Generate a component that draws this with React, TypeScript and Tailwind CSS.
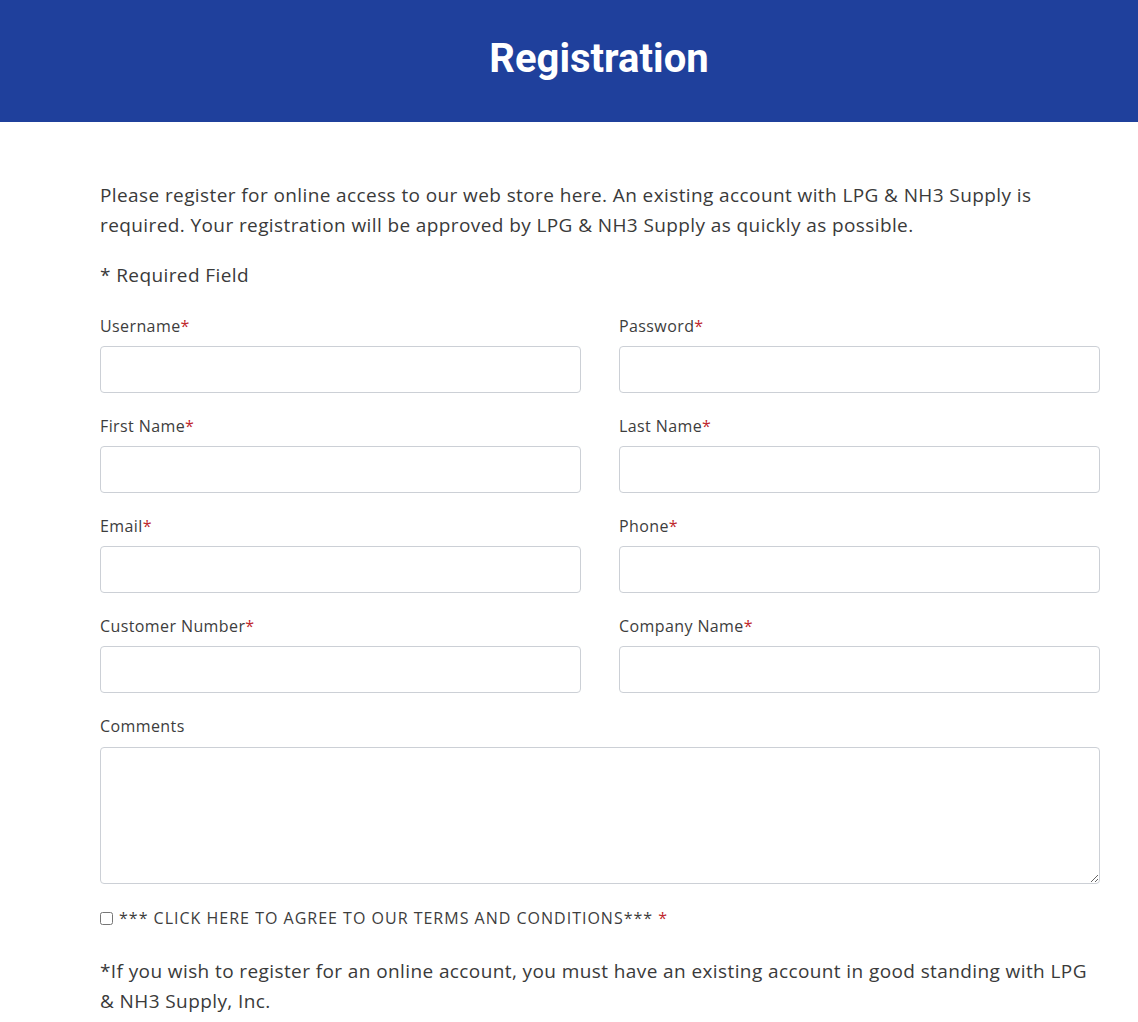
const FIELDS: readonly [string, string][] = [
  ["Username", "Password"],
  ["First Name", "Last Name"],
  ["Email", "Phone"],
  ["Customer Number", "Company Name"],
];

function Field({ label }: { readonly label: string }) {
  return (
    <div className="flex flex-col">
      <label className="h-[20px] text-[16px] leading-[20px] tracking-[0.4px] text-[#3d3d3d]">
        {label}
        <span className="text-[#c0282d]">*</span>
      </label>
      <input
        type="text"
        className="mt-[10px] h-[47px] w-full rounded-[4px] border border-[#ccd0d6] bg-white px-3 outline-none"
      />
    </div>
  );
}

export default function App() {
  return (
    <div className="min-h-screen bg-white font-['Open_Sans',sans-serif] text-[#3a3a3a]">
      <header className="flex h-[122px] items-center justify-center bg-[#1f409c] pb-[4px]">
        <h1 className="pl-[60px] font-['Roboto',sans-serif] text-[40px] font-bold text-white">
          Registration
        </h1>
      </header>

      <main className="ml-[100px] w-[1000px] pt-[58px]">
        <p className="text-[19px] leading-[30px] tracking-[0.4px]">
          Please register for online access to our web store here. An existing account with LPG &amp; NH3 Supply is
          required. Your registration will be approved by LPG &amp; NH3 Supply as quickly as possible.
        </p>
        <p className="mt-[20px] text-[19px] leading-[30px] tracking-[0.4px]">* Required Field</p>

        <div className="mt-[26px] grid grid-cols-2 gap-x-[38px] gap-y-[23px]">
          {FIELDS.map(([a, b]) => [<Field key={a} label={a} />, <Field key={b} label={b} />])}
        </div>

        <div className="mt-[23px] flex flex-col">
          <label className="h-[20px] text-[16px] leading-[20px] tracking-[0.4px] text-[#3d3d3d]">Comments</label>
          <textarea className="mt-[11px] h-[137px] w-full rounded-[4px] border border-[#ccd0d6] bg-white px-3 outline-none" />
        </div>

        <label className="mt-[22px] flex items-center gap-[6px] text-[16px] leading-[24px] tracking-[1px] text-[#3d3d3d]">
          <input type="checkbox" className="m-0 h-[13px] w-[13px]" />
          <span>
            *** CLICK HERE TO AGREE TO OUR TERMS AND CONDITIONS*** <span className="text-[#c0282d]">*</span>
          </span>
        </label>

        <p className="mt-[26px] text-[19px] leading-[30px] tracking-[0.4px]">
          *If you wish to register for an online account, you must have an existing account in good standing with LPG
          &amp; NH3 Supply, Inc.
        </p>
      </main>
    </div>
  );
}
